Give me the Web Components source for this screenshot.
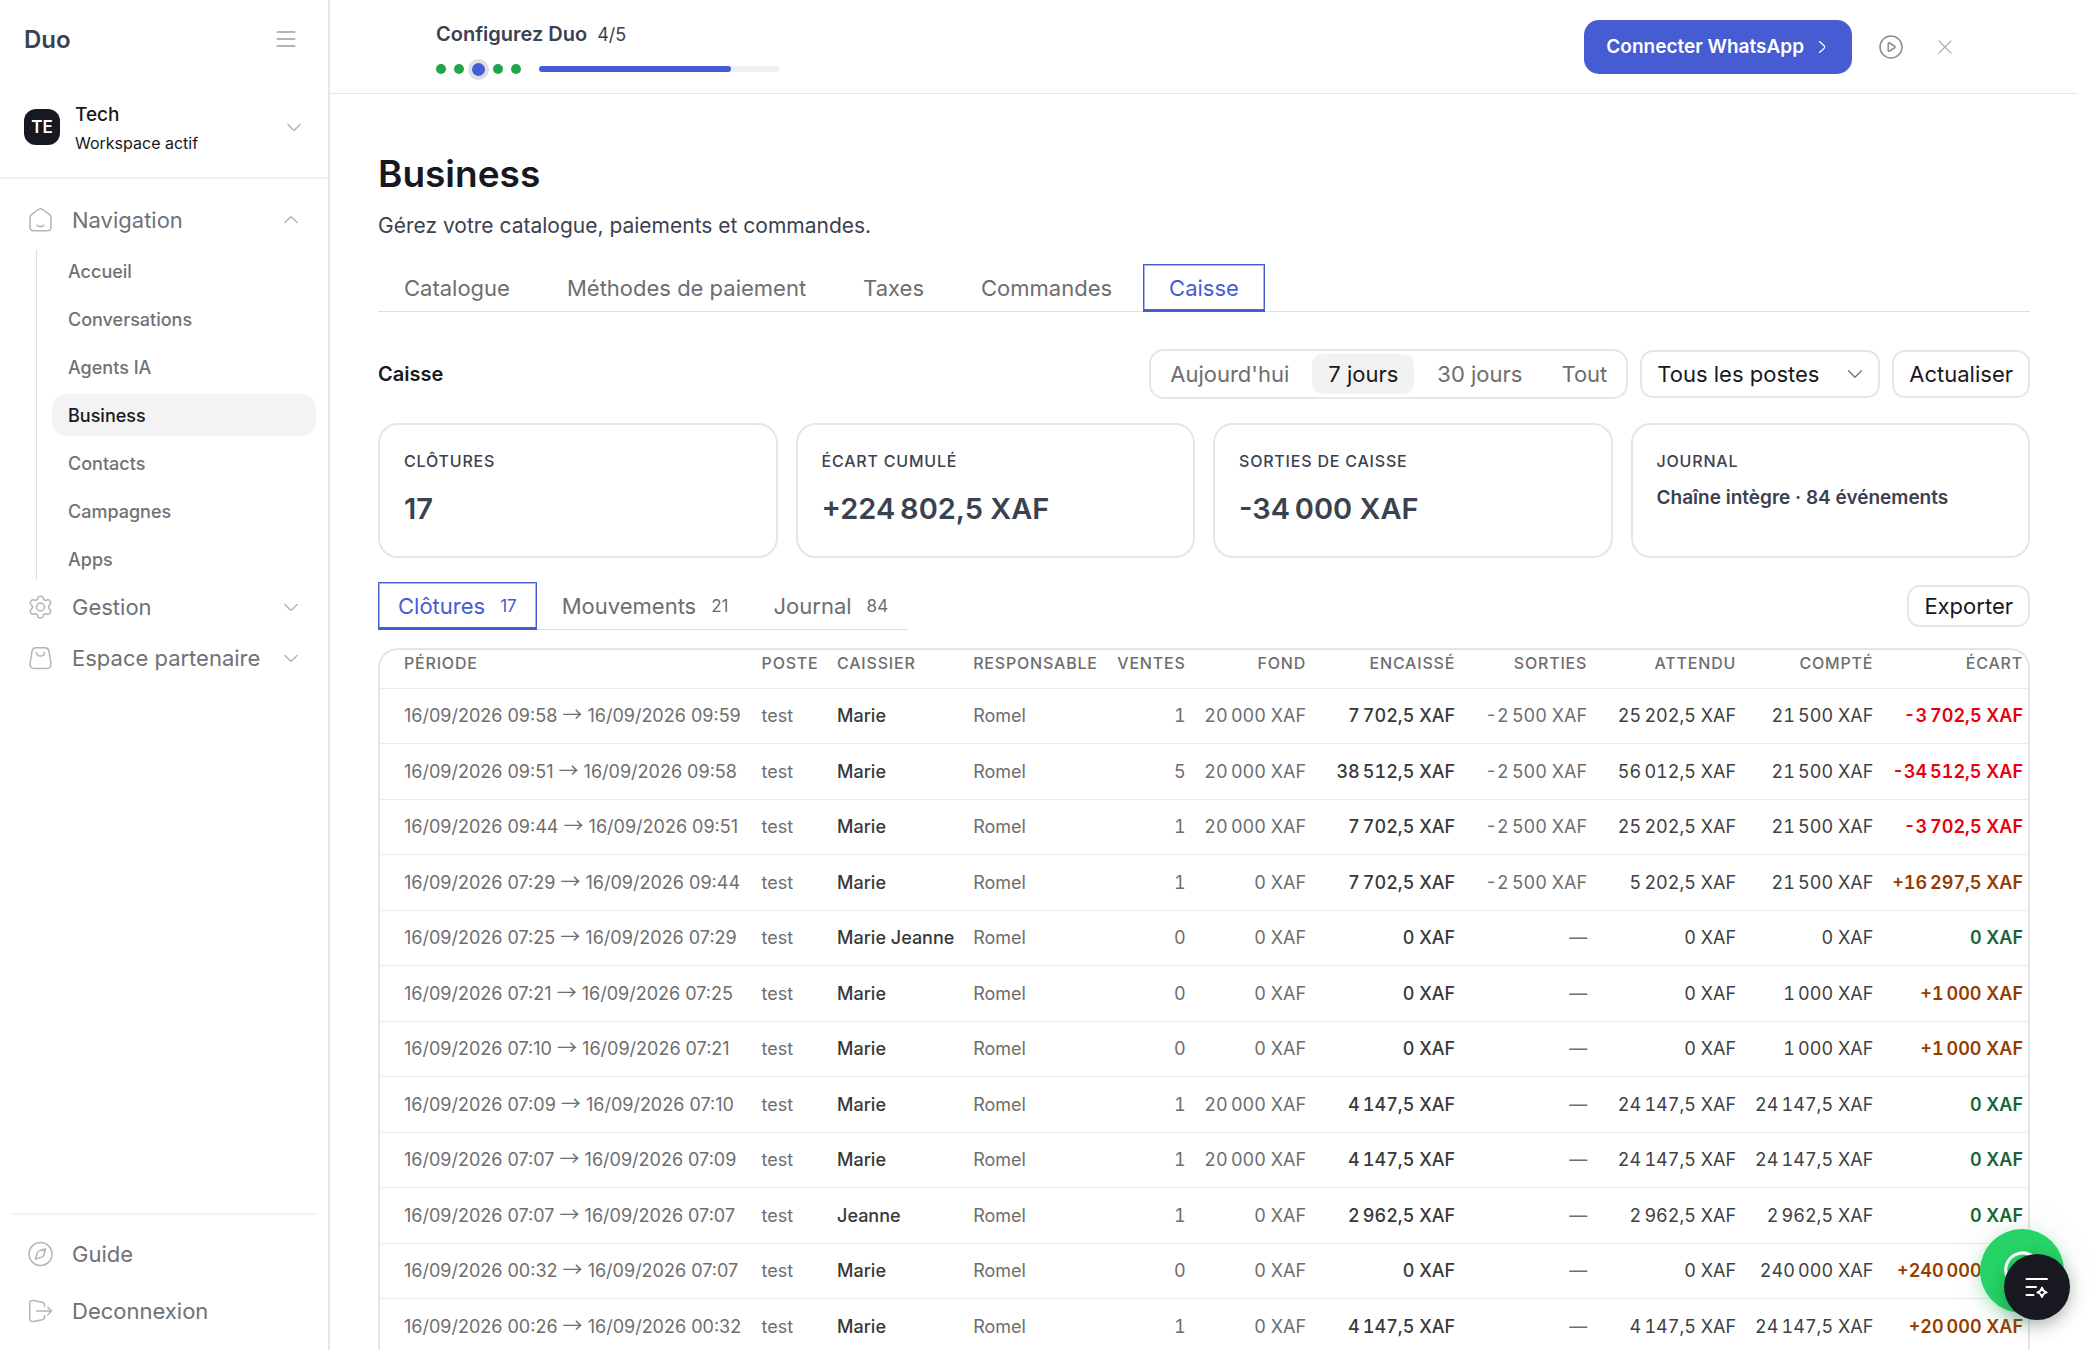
<!DOCTYPE html>
<html lang="fr">
<head>
<meta charset="utf-8">
<meta name="viewport" content="width=device-width, initial-scale=1">
<title>Duo - Business</title>
<style>
    :root {
        --ink: #181920;
        --slate: #3a4150;
        --muted: #6f7178;
        --grey: #6e6e6e;
        --line: #e6e6e6;
        --blue: #455cd3;
    }

    body {
        margin: 0;
        background: #fff;
        color: var(--ink);
        font-family: Inter, "Liberation Sans", sans-serif;
        font-size: 22px;
    }
</style>
</head>
<body>
<duo-app>
    <duo-sidebar slot="sidebar"></duo-sidebar>
    <duo-setup-bar slot="top" step="4" total="5"></duo-setup-bar>

    <duo-page-head heading="Business">Gérez votre catalogue, paiements et commandes.</duo-page-head>
    <duo-tabs>
        <duo-tab>Catalogue</duo-tab>
        <duo-tab>Méthodes de paiement</duo-tab>
        <duo-tab>Taxes</duo-tab>
        <duo-tab>Commandes</duo-tab>
        <duo-tab active>Caisse</duo-tab>
    </duo-tabs>
    <duo-toolbar></duo-toolbar>
    <duo-stats>
        <duo-stat label="Clôtures">17</duo-stat>
        <duo-stat label="Écart cumulé">+224&#8239;802,5&nbsp;XAF</duo-stat>
        <duo-stat label="Sorties de caisse">-34&#8239;000&nbsp;XAF</duo-stat>
        <duo-stat label="Journal" small>Chaîne intègre · 84 événements</duo-stat>
    </duo-stats>
    <duo-section-bar>
        <duo-tabs compact>
            <duo-tab count="17" active>Clôtures</duo-tab>
            <duo-tab count="21">Mouvements</duo-tab>
            <duo-tab count="84">Journal</duo-tab>
        </duo-tabs>
        <duo-button slot="end">Exporter</duo-button>
    </duo-section-bar>
    <duo-closings></duo-closings>

    <duo-fab slot="fab"></duo-fab>
</duo-app>

<script>
const ICONS = {
    menu: '<path d="M3.5 5h17M3.5 12h17M3.5 19h17"/>',
    down: '<path d="M6 9.5l4.6 4.7a2 2 0 0 0 2.8 0L18 9.5"/>',
    up: '<path d="M6 14.5l4.6-4.7a2 2 0 0 1 2.8 0l4.6 4.7"/>',
    select: '<path d="M5 8.500l7 7 7-7"/>',
    right: '<path d="M9 5.5l5.6 5.1a2 2 0 0 1 0 2.8L9 18.5"/>',
    home: '<path d="M1.5 10.2c0-1.6.6-3 2-4L10 1.500c1.300-.9 2.700-.9 4 0l6.500 4.700c1.400 1 2 2.400 2 4V19c0 2.500-1.200 3.700-3.700 3.700H5.200c-2.500 0-3.700-1.200-3.700-3.700z"/><path d="M8.500 17.300c2 1.500 5 1.500 7 0"/>',
    gear: '<circle cx="12" cy="12" r="4"/><path d="M9.500 1.900c.5-1.600 4.500-1.600 5 0l.6 1.500c.4 1.100 1.300 1.600 2.400 1.300l1.900-.5c1.700-.4 3.700 3.200 2.500 4.400l-1.300 1.400c-.8.900-.8 2.100 0 3l1.300 1.400c1.200 1.300-.8 4.800-2.500 4.400l-1.900-.5c-1.100-.3-2 .3-2.400 1.300l-.6 1.600c-.5 1.600-4.500 1.600-5 0l-.6-1.600c-.4-1-1.300-1.600-2.400-1.300l-1.900.5c-1.700.4-3.700-3.100-2.500-4.400L3.400 13c.8-.9.800-2.100 0-3L2.100 8.600C.9 7.400 2.900 3.800 4.600 4.200l1.900.5c1.100.3 2-.2 2.400-1.300z" transform="translate(0 .5)"/>',
    bag: '<path d="M7.500 1.700h9c2.200 0 3.500 1 3.900 3.200l2 12.300c.5 3.500-1 5.200-4.400 5.200H6c-3.400 0-4.900-1.700-4.400-5.200l2-12.300c.4-2.200 1.700-3.200 3.900-3.200z"/><path d="M8 6.500c.3 4.700 7.700 4.700 8 0"/>',
    compass: '<circle cx="12" cy="12" r="11.500"/><path d="M7 17l1.600-5.800c.4-1.400 1.200-2.200 2.600-2.600L17 7l-1.600 5.800c-.4 1.400-1.200 2.200-2.600 2.600z"/>',
    exit: '<path d="M16 7.500V6.300c0-1.500-.6-2.600-2.200-3L5 1.500C2.500 1 1.300 2 1.300 4.500v15c0 2.500 1.200 3.500 3.700 3l8.800-1.800c1.600-.4 2.200-1.500 2.200-3v-1.200"/><path d="M8 12h15M19.300 8.300L23 12l-3.700 3.700"/>',
    play: '<circle cx="12" cy="12" r="11"/><path d="M9.200 8.800c0-.9.700-1.200 1.400-.8l4.800 3c.8.500.8 1.500 0 2l-4.800 3c-.7.400-1.400.1-1.400-.8z"/>',
    close: '<path d="M5.500 5.500l13 13M18.500 5.500l-13 13"/>',
    spark: '<path d="M1.500 4H22M1.500 12h9.500M1.500 20h7"/><path d="M17 12.700c.7 3 1.700 4 4.600 4.700-2.900.7-3.900 1.700-4.600 4.700-.7-3-1.700-4-4.600-4.700 2.900-.7 3.900-1.700 4.600-4.700z"/>',
    chat: '<path d="M1.800 22.500l1.600-5.600A10.600 10.600 0 1 1 8 20.900z"/>'
};

// Base class: every element renders its template in an open shadow root
class DuoElement extends HTMLElement
{
    constructor()
    {
        super();
        this.attachShadow({mode: "open"});
    }

    connectedCallback()
    {
        const template = document.createElement("template");
        template.innerHTML = `<style>${this.getStyles()}</style>${this.getTemplate()}`;
        this.shadowRoot.replaceChildren(template.content.cloneNode(true));
    }
}

class DuoIcon extends DuoElement
{
    getTemplate()
    {
        return `<svg viewBox="0 0 24 24" aria-hidden="true">${ICONS[this.getAttribute("name")]}</svg>`;
    }

    getStyles()
    {
        return `
            :host { display: block; flex: none; width: 24px; height: 24px; color: #b4b4b4; }
            svg {
                display: block; width: 100%; height: 100%; overflow: visible;
                fill: none; stroke: currentColor; stroke-width: var(--stroke, 1.5);
                stroke-linecap: round; stroke-linejoin: round;
            }
        `;
    }
}
customElements.define("duo-icon", DuoIcon);

class DuoApp extends DuoElement
{
    getTemplate()
    {
        return `
            <slot name="sidebar"></slot>
            <div class="page">
                <slot name="top"></slot>
                <main><slot></slot></main>
            </div>
            <slot name="fab"></slot>
        `;
    }

    getStyles()
    {
        return `
            :host { display: flex; height: 100vh; overflow: hidden; }
            .page { flex: 1; min-width: 0; margin-right: 22px; }
            main { padding: 56px 48px 0; }
        `;
    }
}
customElements.define("duo-app", DuoApp);

class DuoNavGroup extends DuoElement
{
    getTemplate()
    {
        const open = this.hasAttribute("open");
        return `
            <button type="button" aria-expanded="${open}">
                <duo-icon name="${this.getAttribute("icon")}"></duo-icon>
                <span>${this.getAttribute("label")}</span>
                <duo-icon class="chevron" name="${open ? "up" : "down"}"></duo-icon>
            </button>
            <div class="items"><slot></slot></div>
        `;
    }

    getStyles()
    {
        return `
            :host { display: block; }
            button {
                display: flex; align-items: center; gap: 19px; width: 100%; height: 51px;
                padding: 0 13px 0 16px; border: 0; background: none;
                color: var(--muted); font: inherit; font-size: 22px; text-align: left;
            }
            span { flex: 1; min-width: 0; white-space: nowrap; }
            button duo-icon { width: 25px; height: 24px; }
            button .chevron { width: 24px; margin-left: -19px; }
            .items { display: none; }
            :host([open]) .items {
                display: grid; gap: 6px; margin: 5px 0 1px 24px; padding: 0 0 0 15px;
                border-left: 1px solid #dedede;
            }
        `;
    }
}
customElements.define("duo-nav-group", DuoNavGroup);

class DuoNavLink extends DuoElement
{
    getTemplate()
    {
        const icon = this.getAttribute("icon");
        return `<a href="#">${icon ? `<duo-icon name="${icon}"></duo-icon>` : ""}<slot></slot></a>`;
    }

    getStyles()
    {
        return `
            :host { display: block; }
            a {
                display: flex; align-items: center; gap: 19px; height: 42px; padding: 0 16px;
                border-radius: 14px; color: var(--muted); font-size: 18px; font-weight: 500;
                text-decoration: none;
            }
            :host([active]) a { background: #f3f3f3; color: var(--ink); }
            :host([icon]) a { height: 57px; font-size: 22px; font-weight: 400; }
            duo-icon { width: 25px; }
        `;
    }
}
customElements.define("duo-nav-link", DuoNavLink);

class DuoSidebar extends DuoElement
{
    getTemplate()
    {
        const links = ["Accueil", "Conversations", "Agents IA", "Business", "Contacts", "Campagnes", "Apps"]
            .map(name => `<duo-nav-link ${name === "Business" ? "active" : ""}>${name}</duo-nav-link>`)
            .join("");

        return `
            <header>
                <strong>Duo</strong>
                <button type="button" aria-label="Menu"><duo-icon name="menu"></duo-icon></button>
            </header>
            <button type="button" class="workspace">
                <span class="avatar">TE</span>
                <span class="who"><b>Tech</b><small>Workspace actif</small></span>
                <duo-icon name="down"></duo-icon>
            </button>
            <nav>
                <duo-nav-group label="Navigation" icon="home" open>${links}</duo-nav-group>
                <duo-nav-group label="Gestion" icon="gear"></duo-nav-group>
                <duo-nav-group label="Espace partenaire" icon="bag"></duo-nav-group>
            </nav>
            <footer>
                <duo-nav-link icon="compass">Guide</duo-nav-link>
                <duo-nav-link icon="exit">Deconnexion</duo-nav-link>
            </footer>
        `;
    }

    getStyles()
    {
        return `
            :host {
                display: flex; flex-direction: column; flex: none; box-sizing: border-box;
                width: 330px; border-right: 2px solid var(--line);
            }
            button { border: 0; padding: 0; background: none; font: inherit; color: inherit; }
            header {
                display: flex; justify-content: space-between; align-items: center;
                height: 78px; padding: 0 30px 0 24px;
            }
            header duo-icon { width: 24px; height: 24px; --stroke: 2; }
            strong { color: var(--slate); font-size: 24px; font-weight: 600; }
            .workspace {
                display: flex; align-items: center; gap: 15px; height: 101px;
                padding: 0 22px 2px 24px; border-bottom: 2px solid #f0f0f0; text-align: left;
            }
            .avatar {
                display: grid; place-items: center; width: 36px; height: 36px;
                border-radius: 12px; background: var(--ink); color: #fff;
                font-size: 17px; font-weight: 600;
            }
            .who { flex: 1; display: grid; padding-top: 5px; }
            .who b { font-size: 19px; font-weight: 500; line-height: 28px; }
            .who small { font-size: 16px; line-height: 28px; }
            nav { flex: 1; padding: 15px 12px 0; }
            footer { margin: 0 12px; padding: 10px 0 11px; border-top: 2px solid #f3f3f3; }
        `;
    }
}
customElements.define("duo-sidebar", DuoSidebar);

class DuoSetupBar extends DuoElement
{
    getTemplate()
    {
        const step = this.getAttribute("step");
        const total = this.getAttribute("total");
        return `
            <div class="setup">
                <p><b>Configurez Duo</b> <span>${step}/${total}</span></p>
                <div class="progress">
                    <i></i><i></i><i class="current"></i><i></i><i></i>
                    <span class="bar"><span style="width: ${step / total * 100}%"></span></span>
                </div>
            </div>
            <div class="actions">
                <button type="button" class="cta">Connecter WhatsApp <duo-icon name="right"></duo-icon></button>
                <button type="button" class="icon" aria-label="Voir la vidéo"><duo-icon name="play"></duo-icon></button>
                <button type="button" class="icon" aria-label="Fermer"><duo-icon name="close"></duo-icon></button>
            </div>
        `;
    }

    getStyles()
    {
        return `
            :host {
                display: flex; align-items: center; justify-content: space-between;
                box-sizing: border-box; height: 94px; padding: 0 106px;
                border-bottom: 1px solid var(--line);
            }
            .setup { padding-top: 8px; }
            p { display: flex; align-items: baseline; gap: 10px; margin: 0 0 12px; color: var(--slate); font-size: 18px; line-height: 24px; }
            b { font-size: 20px; font-weight: 600; }
            .progress { display: flex; align-items: center; gap: 8px; height: 20px; }
            i { width: 10px; height: 10px; border-radius: 50%; background: #1ea64c; }
            i.current { width: 13px; height: 13px; background: var(--blue); box-shadow: 0 0 0 4px #dcdfea; }
            .bar { width: 240px; height: 6px; margin-left: 10px; border-radius: 3px; background: #efefef; }
            .bar span { display: block; height: 6px; border-radius: 3px; background: var(--blue); }
            .actions { display: flex; align-items: center; }
            button { border: 0; padding: 0; background: none; font: inherit; }
            .cta {
                display: flex; align-items: center; gap: 8px; height: 54px; margin-right: 12px;
                padding: 0 20px 0 22px; border-radius: 15px; background: var(--blue);
                color: #fff; font-size: 19px; font-weight: 600;
            }
            .cta duo-icon { width: 20px; height: 20px; color: #fff; }
            .icon { display: grid; place-items: center; width: 54px; height: 54px; }
            .icon duo-icon { color: #8c8c8c; }
            .icon:last-child duo-icon { width: 22px; height: 22px; color: #b4b4b4; }
        `;
    }
}
customElements.define("duo-setup-bar", DuoSetupBar);

class DuoPageHead extends DuoElement
{
    getTemplate()
    {
        return `<h1>${this.getAttribute("heading")}</h1><p><slot></slot></p>`;
    }

    getStyles()
    {
        return `
            :host { display: block; margin-bottom: 22px; }
            h1 { margin: 0; font-size: 37px; font-weight: 600; line-height: 48px; }
            p { margin: 12px 0 0; color: var(--slate); font-size: 21px; line-height: 32px; }
        `;
    }
}
customElements.define("duo-page-head", DuoPageHead);

class DuoTabs extends DuoElement
{
    getTemplate()
    {
        return `<slot></slot>`;
    }

    getStyles()
    {
        return `
            :host { display: flex; gap: 5px; border-bottom: 1px solid #dfdfdf; }
            :host([compact]) { --tab-pad: 20px; }
        `;
    }
}
customElements.define("duo-tabs", DuoTabs);

class DuoTab extends DuoElement
{
    getTemplate()
    {
        const count = this.getAttribute("count");
        return `
            <button type="button" role="tab" aria-selected="${this.hasAttribute("active")}">
                <slot></slot>${count ? `<small>${count}</small>` : ""}
            </button>
        `;
    }

    getStyles()
    {
        return `
            :host { display: block; margin-bottom: -1px; }
            button {
                display: flex; align-items: center; gap: 15px; height: 48px;
                padding: 0 var(--tab-pad, 26px); border: 0; background: none;
                color: var(--grey); font: inherit; font-size: 22px;
            }
            small { font-size: 17px; }
            :host([active]) button {
                color: var(--blue);
                box-shadow: inset 0 -3px 0 var(--blue), inset 0 0 0 1px var(--blue), inset 0 0 0 2px #a9b4ec;
            }
        `;
    }
}
customElements.define("duo-tab", DuoTab);

class DuoButton extends DuoElement
{
    getTemplate()
    {
        return `<button type="button"><slot></slot></button>`;
    }

    getStyles()
    {
        return `
            :host { display: block; }
            button {
                box-sizing: border-box; height: var(--button-height, 42px); padding: 0 15px;
                border: 2px solid var(--line); border-radius: 13px; background: #fff;
                color: var(--ink); font: inherit; font-size: 22px;
            }
        `;
    }
}
customElements.define("duo-button", DuoButton);

class DuoToolbar extends DuoElement
{
    getTemplate()
    {
        const ranges = ["Aujourd'hui", "7 jours", "30 jours", "Tout"]
            .map(name => `<button type="button" aria-pressed="${name === "7 jours"}">${name}</button>`)
            .join("");

        return `
            <h2>Caisse</h2>
            <div class="ranges">${ranges}</div>
            <label>
                <select aria-label="Poste"><option>Tous les postes</option></select>
                <duo-icon name="select"></duo-icon>
            </label>
            <duo-button>Actualiser</duo-button>
        `;
    }

    getStyles()
    {
        return `
            :host { display: flex; align-items: center; gap: 12px; margin: 37px 0 24px; }
            h2 { flex: 1; margin: 0; font-size: 20px; font-weight: 600; }
            .ranges {
                display: flex; gap: 7px; box-sizing: border-box; height: 50px; padding: 3px;
                border: 2px solid var(--line); border-radius: 15px;
            }
            .ranges button {
                height: 40px; padding: 0 16px; border: 0; border-radius: 11px;
                background: none; color: var(--grey); font: inherit; font-size: 22px;
            }
            .ranges button[aria-pressed=true] { background: #f2f2f1; color: var(--ink); }
            label { display: grid; align-items: center; }
            select {
                grid-area: 1 / 1; appearance: none; box-sizing: border-box; width: 240px; height: 48px;
                padding: 0 15px; border: 2px solid var(--line); border-radius: 13px;
                background: #fff; color: var(--ink); font: inherit; font-size: 22px;
            }
            label duo-icon {
                grid-area: 1 / 1; justify-self: end; width: 22px; height: 22px;
                margin-right: 14px; color: #777; pointer-events: none;
            }
            duo-button { --button-height: 48px; }
        `;
    }
}
customElements.define("duo-toolbar", DuoToolbar);

class DuoStats extends DuoElement
{
    getTemplate()
    {
        return `<slot></slot>`;
    }

    getStyles()
    {
        return `:host { display: grid; grid-template-columns: repeat(4, 1fr); gap: 18px; }`;
    }
}
customElements.define("duo-stats", DuoStats);

class DuoStat extends DuoElement
{
    getTemplate()
    {
        return `<h3>${this.getAttribute("label")}</h3><p><slot></slot></p>`;
    }

    getStyles()
    {
        return `
            :host {
                display: block; box-sizing: border-box; min-height: 135px; padding: 23px 24px 20px;
                border: 2px solid var(--line); border-radius: 20px; color: var(--slate);
            }
            h3 { margin: 0; font-size: 16px; font-weight: 500; line-height: 26px; letter-spacing: .05em; text-transform: uppercase; }
            p { margin: 14px 0 0; font-size: 29px; font-weight: 600; line-height: 42px; }
            :host([small]) p { margin-top: 10px; font-size: 19px; font-weight: 600; line-height: 28px; }
        `;
    }
}
customElements.define("duo-stat", DuoStat);

class DuoSectionBar extends DuoElement
{
    getTemplate()
    {
        return `<slot></slot><slot name="end"></slot>`;
    }

    getStyles()
    {
        return `:host { display: flex; align-items: center; justify-content: space-between; margin: 24px 0 18px; }`;
    }
}
customElements.define("duo-section-bar", DuoSectionBar);

class DuoClosings extends DuoElement
{
    get rows()
    {
        // start, end, cashier, sales, float, takings, payouts, expected, counted, gap
        return [
            ["09:58", "09:59", "Marie", 1, 20000, 7702.5, -2500, 25202.5, 21500, -3702.5],
            ["09:51", "09:58", "Marie", 5, 20000, 38512.5, -2500, 56012.5, 21500, -34512.5],
            ["09:44", "09:51", "Marie", 1, 20000, 7702.5, -2500, 25202.5, 21500, -3702.5],
            ["07:29", "09:44", "Marie", 1, 0, 7702.5, -2500, 5202.5, 21500, 16297.5],
            ["07:25", "07:29", "Marie Jeanne", 0, 0, 0, null, 0, 0, 0],
            ["07:21", "07:25", "Marie", 0, 0, 0, null, 0, 1000, 1000],
            ["07:10", "07:21", "Marie", 0, 0, 0, null, 0, 1000, 1000],
            ["07:09", "07:10", "Marie", 1, 20000, 4147.5, null, 24147.5, 24147.5, 0],
            ["07:07", "07:09", "Marie", 1, 20000, 4147.5, null, 24147.5, 24147.5, 0],
            ["07:07", "07:07", "Jeanne", 1, 0, 2962.5, null, 2962.5, 2962.5, 0],
            ["00:32", "07:07", "Marie", 0, 0, 0, null, 0, 240000, 240000],
            ["00:26", "00:32", "Marie", 1, 0, 4147.5, null, 4147.5, 24147.5, 20000]
        ];
    }

    money(value)
    {
        if(value === null)
            return "—";

        const [whole, cents] = String(value).split(".");
        return whole.replace(/\B(?=(\d{3})+$)/g, "\u202f") + (cents ? "," + cents : "") + "\u00a0XAF";
    }

    getTemplate()
    {
        const rows = this.rows.map(([start, end, cashier, sales, fund, cash, out, expected, counted, gap]) => {
            const tone = gap < 0 ? "short" : gap > 0 ? "over" : "even";
            return `
                <tr>
                    <td>16/09/2026 ${start} <span class="arrow">→</span> 16/09/2026 ${end}</td>
                    <td>test</td>
                    <td class="name">${cashier}</td>
                    <td>Romel</td>
                    <td class="num">${sales}</td>
                    <td class="num">${this.money(fund)}</td>
                    <td class="num strong">${this.money(cash)}</td>
                    <td class="num">${this.money(out)}</td>
                    <td class="num dark">${this.money(expected)}</td>
                    <td class="num dark">${this.money(counted)}</td>
                    <td class="num ${tone}">${gap > 0 ? "+" : ""}${this.money(gap)}</td>
                </tr>
            `;
        }).join("");

        return `
            <table>
                <thead>
                    <tr>
                        <th>Période</th><th>Poste</th><th>Caissier</th><th>Responsable</th>
                        <th class="num">Ventes</th><th class="num">Fond</th>
                        <th class="num wide">Encaissé</th><th class="num out">Sorties</th>
                        <th class="num wide">Attendu</th><th class="num">Compté</th><th class="num">Écart</th>
                    </tr>
                </thead>
                <tbody>${rows}</tbody>
            </table>
        `;
    }

    getStyles()
    {
        return `
            :host {
                display: block; overflow: hidden;
                border: 2px solid var(--line); border-bottom: 0; border-radius: 20px 20px 0 0;
            }
            table { width: 100%; border-collapse: separate; border-spacing: 0; white-space: nowrap; }
            th, td { box-sizing: border-box; padding: 0 18px 0 0; border-bottom: 1px solid #ebebeb; text-align: left; color: var(--grey); }
            th:first-child, td:first-child { padding-left: 24px; }
            th:last-child, td:last-child { padding-right: 5px; }
            th { height: 39px; padding-bottom: 13px; font-size: 16px; font-weight: 500; line-height: 24px; letter-spacing: .05em; text-transform: uppercase; }
            td { height: 55px; font-size: 18px; line-height: 24px; }
            tr:nth-child(even) td { height: 56px; }
            .arrow { font-family: "Noto Sans CJK JP", sans-serif; font-size: 20px; line-height: 0; }
            .num { text-align: right; font-variant-numeric: tabular-nums; }
            .wide { min-width: 149px; width: 149px; }
            .out { min-width: 132px; width: 132px; }
            .name, .strong { color: #383838; font-weight: 500; }
            .dark { color: #404040; }
            .short { color: #e7000b; font-weight: 600; }
            .over { color: #973c00; font-weight: 600; }
            .even { color: #166534; font-weight: 600; }
        `;
    }
}
customElements.define("duo-closings", DuoClosings);

// Floating shortcuts, pinned over the page
class DuoFab extends DuoElement
{
    getTemplate()
    {
        return `
            <button type="button" class="whatsapp" aria-label="WhatsApp"><duo-icon name="chat"></duo-icon></button>
            <button type="button" class="assistant" aria-label="Assistant"><duo-icon name="spark"></duo-icon></button>
        `;
    }

    getStyles()
    {
        return `
            button { position: fixed; display: grid; place-items: center; padding: 0; border: 0; border-radius: 50%; }
            duo-icon { color: #fff; }
            .whatsapp {
                right: 36px; bottom: 37px; width: 84px; height: 84px; background: #25d366;
                box-shadow: 0 6px 18px rgba(37, 211, 102, .3), 0 0 40px rgba(0, 0, 0, .08);
            }
            .whatsapp duo-icon { width: 38px; height: 38px; --stroke: 2; }
            .assistant {
                right: 30px; bottom: 30px; width: 66px; height: 66px; background: var(--ink);
                box-shadow: 0 6px 18px rgba(0, 0, 0, .25);
            }
            .assistant duo-icon { width: 24px; height: 24px; --stroke: 2; }
        `;
    }
}
customElements.define("duo-fab", DuoFab);
</script>
</body>
</html>
